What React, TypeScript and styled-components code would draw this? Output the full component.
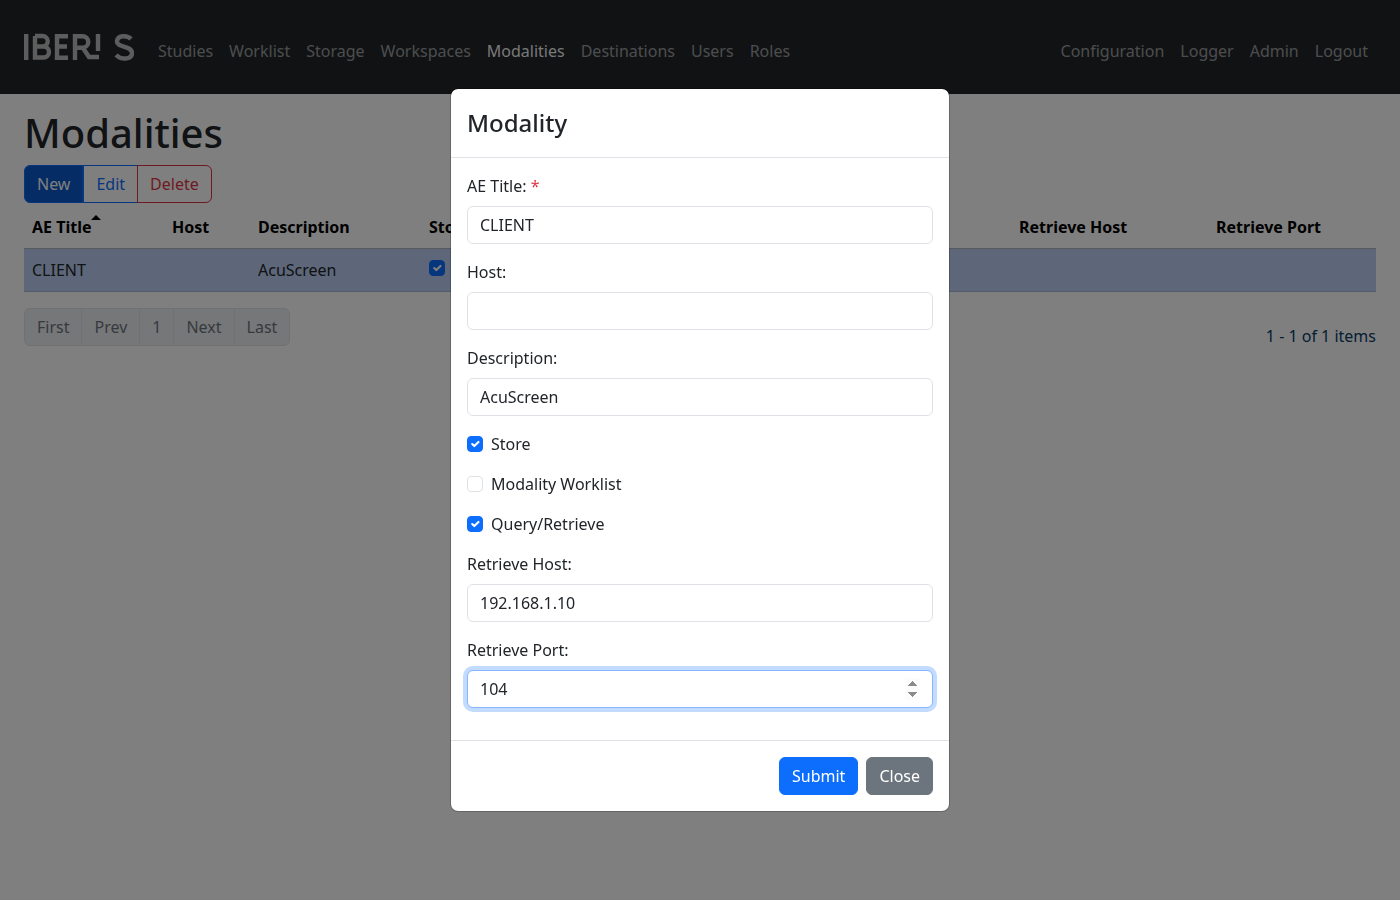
import React from "react";
import styled, { createGlobalStyle } from "styled-components";

const GlobalStyle = createGlobalStyle`
  * { box-sizing: border-box; }
  html, body { margin: 0; padding: 0; height: 100%; }
  body {
    font-family: "Noto Sans", "Open Sans", "Liberation Sans", sans-serif;
    font-size: 16px;
    line-height: 24px;
    color: #212529;
    background: #fff;
    overflow: hidden;
  }
`;

const Navbar = styled.nav`
  height: 94px;
  background: #212529;
  display: flex;
  align-items: center;
  padding: 0 24px;
`;

const Brand = styled.svg`
  width: 110px;
  height: 28px;
  margin-right: 16px;
  flex: none;
`;

const NavGroup = styled.div`
  display: flex;
  margin-top: 8px;
  margin-left: ${(p: { $end?: boolean }) => (p.$end ? "auto" : "0")};
`;

const NavLink = styled.a<{ $active?: boolean }>`
  padding: 8px;
  color: ${(p) => (p.$active ? "rgba(255,255,255,.95)" : "rgba(255,255,255,.55)")};
  text-decoration: none;
`;

const Main = styled.main`
  padding: 15px 24px 0;
`;

const Title = styled.h1`
  margin: 0 0 8px;
  font-size: 40px;
  line-height: 48px;
  font-weight: 500;
`;

const ButtonGroup = styled.div`
  display: inline-flex;
  vertical-align: top;
`;

const GroupButton = styled.button<{ $tone: "primary" | "edit" | "danger" }>`
  height: 38px;
  padding: 0 12px;
  font: inherit;
  background: ${(p) => (p.$tone === "primary" ? "#0a58ca" : "transparent")};
  color: ${(p) => (p.$tone === "primary" ? "#fff" : p.$tone === "edit" ? "#0d6efd" : "#dc3545")};
  border: 1px solid ${(p) => (p.$tone === "danger" ? "#dc3545" : "#0d6efd")};
  margin-left: ${(p) => (p.$tone === "danger" ? "-1px" : "0")};
  border-radius: ${(p) =>
    p.$tone === "primary" ? "6px 0 0 6px" : p.$tone === "danger" ? "0 6px 6px 0" : "0"};
`;

const Table = styled.table`
  width: 1352px;
  margin: 4px 0 16px;
  border-collapse: collapse;
  table-layout: fixed;
`;

const HeadCell = styled.th`
  height: 41px;
  padding: 0 8px;
  text-align: left;
  font-weight: 700;
  color: #000;
  border-bottom: 1px solid #adb5bd;
`;

const Caret = styled.span`
  display: inline-block;
  width: 0;
  height: 0;
  margin-bottom: 13px;
  border-left: 5px solid transparent;
  border-right: 5px solid transparent;
  border-bottom: 5px solid #000;
`;

const Row = styled.tr`
  background: #bacff3;
`;

const Cell = styled.td`
  height: 43px;
  padding: 0 8px;
  border-bottom: 1px solid #a9b9d2;
`;

const Footer = styled.div`
  display: flex;
  justify-content: space-between;
  align-items: flex-start;
`;

const Pager = styled.div`
  display: inline-flex;
  height: 38px;
  border: 1px solid #dee2e6;
  border-radius: 6px;
  background: #edeff2;
  overflow: hidden;
`;

const PagerItem = styled.span`
  padding: 6px 12px;
  color: #6c757d;
  & + & {
    border-left: 1px solid #dee2e6;
  }
`;

const Count = styled.div`
  padding-top: 16px;
  color: #0b3d66;
`;

const Backdrop = styled.div`
  position: fixed;
  inset: 0;
  background: rgba(0, 0, 0, 0.5);
  display: flex;
  align-items: center;
  justify-content: center;
`;

const Dialog = styled.div`
  width: 500px;
  background: #fff;
  border: 1px solid rgba(0, 0, 0, 0.2);
  border-radius: 8px;
  background-clip: padding-box;
`;

const DialogHeader = styled.div`
  height: 69px;
  padding: 16px;
  border-bottom: 1px solid #dee2e6;
`;

const DialogTitle = styled.h5`
  margin: 0;
  font-size: 24px;
  line-height: 36px;
  font-weight: 500;
`;

const DialogBody = styled.div`
  padding: 16px;
`;

const Field = styled.div`
  margin-bottom: 16px;
`;

const Label = styled.label`
  display: block;
  margin-bottom: 8px;
`;

const Required = styled.span`
  color: #dc3545;
`;

const Input = styled.input<{ $focused?: boolean }>`
  display: block;
  width: 100%;
  height: 38px;
  padding: 6px 12px;
  font: inherit;
  color: #212529;
  background: #fff;
  border: 1px solid ${(p) => (p.$focused ? "#86b7fe" : "#dee2e6")};
  border-radius: 6px;
  outline: none;
  box-shadow: ${(p) => (p.$focused ? "0 0 0 4px rgba(13,110,253,.25)" : "none")};
  &::-webkit-inner-spin-button {
    opacity: 1;
  }
`;

const CheckRow = styled.label`
  display: flex;
  align-items: center;
  gap: 8px;
  height: 24px;
  margin-bottom: 16px;
`;

const checkMark =
  "url(\"data:image/svg+xml,%3csvg xmlns='http://www.w3.org/2000/svg' viewBox='0 0 20 20'%3e%3cpath fill='none' stroke='%23fff' stroke-linecap='round' stroke-linejoin='round' stroke-width='3' d='m6 10 3 3 6-6'/%3e%3c/svg%3e\")";

const Check = styled.input.attrs({ type: "checkbox" })`
  appearance: none;
  flex: none;
  width: 16px;
  height: 16px;
  margin: 0;
  border: 1px solid #dee2e6;
  border-radius: 4px;
  background: #fff;
  &:checked {
    background: #0d6efd ${checkMark} center / 100% no-repeat;
    border-color: #0d6efd;
  }
`;

const DialogFooter = styled.div`
  display: flex;
  justify-content: flex-end;
  gap: 8px;
  padding: 16px;
  border-top: 1px solid #dee2e6;
`;

const ActionButton = styled.button<{ $secondary?: boolean }>`
  height: 38px;
  padding: 0 12px;
  font: inherit;
  color: #fff;
  background: ${(p) => (p.$secondary ? "#6c757d" : "#0d6efd")};
  border: 1px solid ${(p) => (p.$secondary ? "#6c757d" : "#0d6efd")};
  border-radius: 6px;
`;

const leftLinks = ["Studies", "Worklist", "Storage", "Workspaces", "Modalities", "Destinations", "Users", "Roles"];
const rightLinks = ["Configuration", "Logger", "Admin", "Logout"];
const columnWidths = [140, 86, 171, 100, 240, 250, 197, 168];
const pagerItems = ["First", "Prev", "1", "Next", "Last"];

function Logo() {
  return (
    <Brand viewBox="0 0 110 28" fill="none" stroke="#bbb" strokeWidth="4.4">
      <path d="M2.2 1v26" />
      <path d="M11 3h7.5a5 5 0 0 1 0 10.5H11m0 0h8.5a5.5 5.5 0 0 1 0 11H11V3" />
      <path d="M44 3.2H33v21.6h11M33 13.5h10" />
      <path d="M51 27V3.200h7.500a5.500 5.500 0 0 1 0 11.500H51M59 15l6 9h10" />
      <path d="M74 1v17" />
      <path d="M107 6c-3-3.500-13-4.500-14 2-1 7 15 4 15 12 0 7-11 7-16 2" />
    </Brand>
  );
}

export default function App() {
  return (
    <>
      <GlobalStyle />
      <Navbar>
        <Logo />
        <NavGroup>
          {leftLinks.map((link) => (
            <NavLink key={link} $active={link === "Modalities"}>
              {link}
            </NavLink>
          ))}
        </NavGroup>
        <NavGroup $end>
          {rightLinks.map((link) => (
            <NavLink key={link}>{link}</NavLink>
          ))}
        </NavGroup>
      </Navbar>
      <Main>
        <Title>Modalities</Title>
        <ButtonGroup>
          <GroupButton $tone="primary">New</GroupButton>
          <GroupButton $tone="edit">Edit</GroupButton>
          <GroupButton $tone="danger">Delete</GroupButton>
        </ButtonGroup>
        <Table>
          <colgroup>
            {columnWidths.map((w, i) => (
              <col key={i} width={w} />
            ))}
          </colgroup>
          <thead>
            <tr>
              <HeadCell>
                AE Title
                <Caret />
              </HeadCell>
              <HeadCell>Host</HeadCell>
              <HeadCell>Description</HeadCell>
              <HeadCell>Store</HeadCell>
              <HeadCell>Modality Worklist</HeadCell>
              <HeadCell>Query/Retrieve</HeadCell>
              <HeadCell>Retrieve Host</HeadCell>
              <HeadCell>Retrieve Port</HeadCell>
            </tr>
          </thead>
          <tbody>
            <Row>
              <Cell>CLIENT</Cell>
              <Cell />
              <Cell>AcuScreen</Cell>
              <Cell>
                <Check defaultChecked />
              </Cell>
              <Cell>
                <Check />
              </Cell>
              <Cell>
                <Check defaultChecked />
              </Cell>
              <Cell />
              <Cell />
            </Row>
          </tbody>
        </Table>
        <Footer>
          <Pager>
            {pagerItems.map((item) => (
              <PagerItem key={item}>{item}</PagerItem>
            ))}
          </Pager>
          <Count>1 - 1 of 1 items</Count>
        </Footer>
      </Main>
      <Backdrop>
        <Dialog>
          <DialogHeader>
            <DialogTitle>Modality</DialogTitle>
          </DialogHeader>
          <DialogBody>
            <Field>
              <Label>
                AE Title: <Required>*</Required>
              </Label>
              <Input defaultValue="CLIENT" />
            </Field>
            <Field>
              <Label>Host:</Label>
              <Input defaultValue="" />
            </Field>
            <Field>
              <Label>Description:</Label>
              <Input defaultValue="AcuScreen" />
            </Field>
            <CheckRow>
              <Check defaultChecked />
              Store
            </CheckRow>
            <CheckRow>
              <Check />
              Modality Worklist
            </CheckRow>
            <CheckRow>
              <Check defaultChecked />
              Query/Retrieve
            </CheckRow>
            <Field>
              <Label>Retrieve Host:</Label>
              <Input defaultValue="192.168.1.10" />
            </Field>
            <Field>
              <Label>Retrieve Port:</Label>
              <Input type="number" defaultValue="104" $focused />
            </Field>
          </DialogBody>
          <DialogFooter>
            <ActionButton>Submit</ActionButton>
            <ActionButton $secondary>Close</ActionButton>
          </DialogFooter>
        </Dialog>
      </Backdrop>
    </>
  );
}
